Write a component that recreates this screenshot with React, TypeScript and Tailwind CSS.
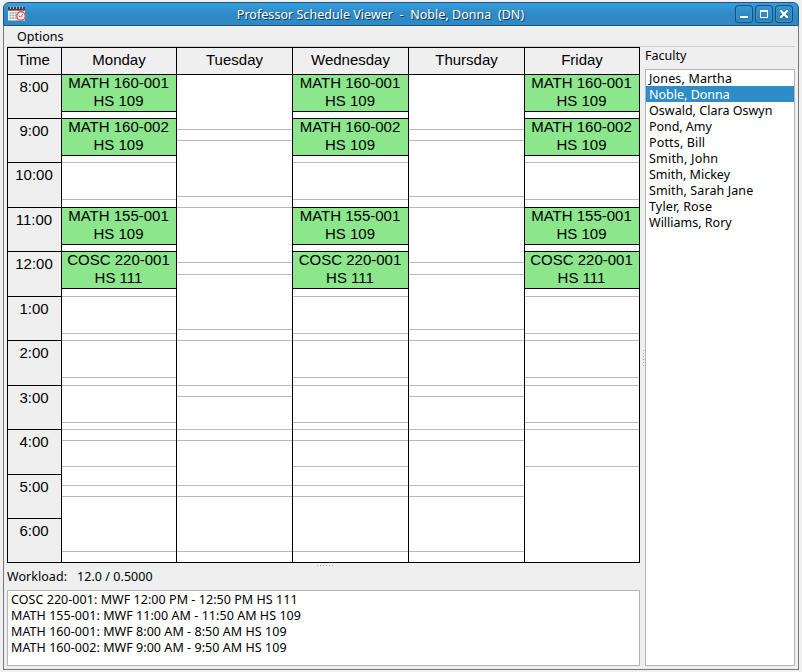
import type { ReactNode } from "react";

const HOURS = [
  { label: "8:00", h: 44 },
  { label: "9:00", h: 44 },
  { label: "10:00", h: 45 },
  { label: "11:00", h: 44 },
  { label: "12:00", h: 45 },
  { label: "1:00", h: 44 },
  { label: "2:00", h: 45 },
  { label: "3:00", h: 44 },
  { label: "4:00", h: 45 },
  { label: "5:00", h: 44 },
  { label: "6:00", h: 44 },
];

type Slot = { h: number; line?: "black" | "gray" | "none"; course?: string; room?: string };

const gray = (heights: number[]): Slot[] => heights.map((h) => ({ h, line: "gray" }));

const MORNING: Slot[] = [
  { h: 37, line: "black", course: "MATH 160-001", room: "HS 109" },
  { h: 7, line: "black" },
  { h: 37, line: "black", course: "MATH 160-002", room: "HS 109" },
  ...gray([7, 37]),
  { h: 8, line: "black" },
  { h: 37, line: "black", course: "MATH 155-001", room: "HS 109" },
  { h: 7, line: "black" },
  { h: 37, line: "black", course: "COSC 220-001", room: "HS 111" },
];

const MW: Slot[] = [...MORNING, ...gray([8, 37, 7, 37, 8, 37, 7, 11, 26, 19, 11, 55]), { h: 10, line: "none" }];
const FRI: Slot[] = [...MORNING, ...gray([8, 37, 7, 37, 8, 37, 7, 37]), { h: 95, line: "none" }];
const TT: Slot[] = [...gray([55, 11, 56, 11, 55, 12, 55, 11, 45, 11, 33, 11, 45, 11, 55]), { h: 10, line: "none" }];

const DAYS = [
  { name: "Monday", slots: MW, width: "w-[115px]" },
  { name: "Tuesday", slots: TT, width: "w-[116px]" },
  { name: "Wednesday", slots: MW, width: "w-[116px]" },
  { name: "Thursday", slots: TT, width: "w-[116px]" },
  { name: "Friday", slots: FRI, width: "w-[114px]" },
];

const FACULTY = [
  { name: "Jones, Martha", track: "tracking-[0.15px]" },
  { name: "Noble, Donna", track: "tracking-normal" },
  { name: "Oswald, Clara Oswyn", track: "tracking-[0.02px]" },
  { name: "Pond, Amy", track: "tracking-[-0.05px]" },
  { name: "Potts, Bill", track: "tracking-[0.15px]" },
  { name: "Smith, John", track: "tracking-[0.2px]" },
  { name: "Smith, Mickey", track: "tracking-normal" },
  { name: "Smith, Sarah Jane", track: "tracking-[0.1px]" },
  { name: "Tyler, Rose", track: "tracking-[0.15px]" },
  { name: "Williams, Rory", track: "tracking-normal" },
];

const SECTIONS = [
  "COSC 220-001: MWF 12:00 PM - 12:50 PM HS 111",
  "MATH 155-001: MWF 11:00 AM - 11:50 AM HS 109",
  "MATH 160-001: MWF 8:00 AM - 8:50 AM HS 109",
  "MATH 160-002: MWF 9:00 AM - 9:50 AM HS 109",
];

const lineClass = {
  black: "border-b border-black",
  gray: "border-b border-[#b8b8b8]",
  none: "",
};

function SlotBox({ slot }: { slot: Slot }) {
  return (
    <div
      className={`${lineClass[slot.line ?? "none"]} ${slot.course ? "bg-[#8ce68c]" : "bg-white"} overflow-hidden pr-[1px] text-center leading-[18px]`}
      style={{ height: slot.h }}
    >
      {slot.course && (
        <div className="-mt-px">
          <div>{slot.course}</div>
          <div>{slot.room}</div>
        </div>
      )}
    </div>
  );
}

function TitleButton({ children }: { children: ReactNode }) {
  return (
    <button className="h-[18px] w-[18px] rounded-[3px] border border-[#1b4f74] bg-linear-to-b from-[#3795d3] to-[#2b80b8] shadow-[inset_0_0_0_1px_#3c93cb]">
      <svg width="16" height="16" viewBox="0 0 16 16" fill="none" shapeRendering="crispEdges">
        {children}
      </svg>
    </button>
  );
}

function CalendarIcon() {
  return (
    <svg width="18" height="16" viewBox="0 0 18 16">
      <rect x="0" y="2" width="17" height="12.5" fill="#f1eeee" />
      <rect x="0" y="1" width="17" height="3.6" fill="#4a3d43" />
      <path d="M2.5 0v3M5.5 0v3M8.5 0v3M11.5 0v3M14.5 0v3" stroke="#b9b4b8" strokeWidth="1" />
      <path d="M1.5 7h8M1.5 9.5h7M1.5 12h7" stroke="#aaa4a4" strokeWidth="1.4" strokeDasharray="1.8 .8" />
      <circle cx="13" cy="10" r="4.2" fill="#fff4f4" stroke="#d35a5a" strokeWidth="1.4" />
      <path d="M10.8 9.8l2 1.2 2.2-3" fill="none" stroke="#cc4444" strokeWidth="1" />
    </svg>
  );
}

export default function App() {
  return (
    <div className="h-[672px] w-[802px] overflow-hidden bg-[#f0f0f0] pt-[2px] pl-[3px] font-['Noto_Sans','Open_Sans',sans-serif] text-[12.5px] text-black">
      <div className="flex h-[668px] w-[796px] flex-col">
        <header className="flex h-6 shrink-0 items-center rounded-t-[6px] border border-[#1d567d] bg-linear-to-b from-[#379fe0] via-[#2f89c5] via-50% to-[#2f89c5] pr-[5px] pl-1">
          <CalendarIcon />
          <h1 className="flex-1 pt-[2px] text-center tracking-[0.03px] whitespace-pre text-white [text-shadow:1px_1px_0_#17384e]">
            Professor Schedule Viewer  -  Noble, Donna  (DN)
          </h1>
          <div className="flex gap-[2px]">
            <TitleButton>
              <path d="M4 11h8" stroke="#fff" strokeWidth="2" />
            </TitleButton>
            <TitleButton>
              <path d="M4 4h8v8H4zM5 6v5h6V6z" fill="#fff" fillRule="evenodd" />
            </TitleButton>
            <TitleButton>
              <path d="M4 4h2v1h1v1h2v-1h1v-1h2v2h-1v1h-1v2h1v1h1v2h-2v-1h-1v-1h-2v1h-1v1h-2v-2h1v-1h1v-2h-1v-1h-1z" fill="#fff" />
            </TitleButton>
          </div>
        </header>

        <div className="flex flex-1 flex-col border-x border-b border-[#777] bg-[#efefef] pr-[3px] pl-[3px]">
          <nav className="flex h-[21px] items-center border-b border-[#d0d0d0] pt-[2px] pl-[10px]">
            <span>Options</span>
          </nav>
          <div className="flex flex-1">
            <main className="flex w-[633px] flex-col">
              <section className="flex h-[516px] border border-black font-['Liberation_Sans',Arial,sans-serif] text-[15px]">
                <div className="w-[54px] border-r border-black text-center">
                  <div className="h-[27px] border-b border-black pr-[2px] leading-[23px]">Time</div>
                  {HOURS.map((hour, i) => (
                    <div
                      key={hour.label}
                      className={`pt-[2px] pr-[1px] leading-[20px] ${i < 10 ? "border-b border-black" : ""}`}
                      style={{ height: hour.h }}
                    >
                      {hour.label}
                    </div>
                  ))}
                </div>
                {DAYS.map((day, i) => (
                  <div key={day.name} className={`${day.width} ${i < 4 ? "border-r border-black" : ""}`}>
                    <div className="h-[27px] border-b border-black text-center leading-[23px]">{day.name}</div>
                    {day.slots.map((slot, j) => (
                      <SlotBox key={j} slot={slot} />
                    ))}
                  </div>
                ))}
              </section>
              <div className="flex h-[5px] items-center justify-center gap-[2px] pl-[3px]">
                {[0, 1, 2, 3, 4, 5].map((n) => (
                  <i key={n} className="h-px w-px bg-[#aaa]" />
                ))}
              </div>
              <div className="flex h-[22px] items-start leading-[18px] tracking-[0.05px]">
                <span className="w-[70px]">Workload:</span>
                <span>12.0 / 0.5000</span>
              </div>
              <ul className="h-[76px] border border-[#b4b4b4] bg-white pt-[1px] pl-[3px] leading-[16px] tracking-[0.05px]">
                {SECTIONS.map((s) => (
                  <li key={s} className="whitespace-nowrap">{s}</li>
                ))}
              </ul>
            </main>
            <div className="flex w-[5px] flex-col items-end gap-[2px] pt-[303px] pr-px">
              {[0, 1, 2, 3, 4, 5].map((n) => (
                <i key={n} className="h-px w-px bg-[#aaa]" />
              ))}
            </div>
            <aside className="w-[150px]">
              <h2 className="h-[22px] leading-[18px]">Faculty</h2>
              <ul className="h-[597px] border border-[#b4b4b4] bg-white leading-[18px]">
                {FACULTY.map((f, i) => (
                  <li key={f.name} className={`h-4 pl-[3px] ${f.track} ${i === 1 ? "bg-[#308cc6] text-white" : ""}`}>
                    {f.name}
                  </li>
                ))}
              </ul>
            </aside>
          </div>
        </div>
      </div>
    </div>
  );
}
